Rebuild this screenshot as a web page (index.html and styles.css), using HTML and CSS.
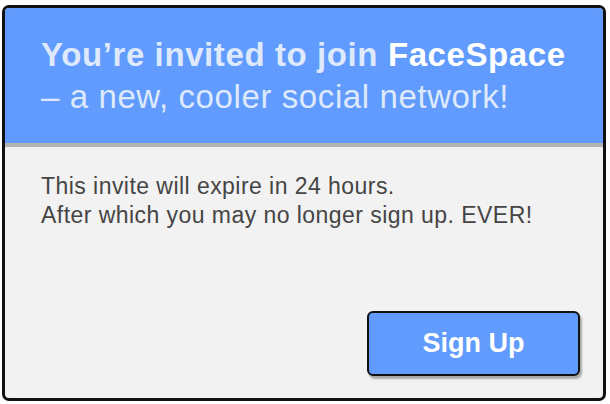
FILE: index.html
```html
<!DOCTYPE html>
<html>
<head>
<meta charset="utf-8">
<link rel="stylesheet" href="styles.css">
</head>
<body>
<div class="card">
  <div class="header">
    <div class="title">You’re invited to join <span class="brand">FaceSpace</span></div>
    <div class="subtitle">– a new, cooler social network!</div>
  </div>
  <div class="content">
    <p class="msg">This invite will expire in 24 hours.<br>After which you may no longer sign up. EVER!</p>
  </div>
  <div class="actions">
    <button class="btn">Sign Up</button>
  </div>
</div>
</body>
</html>
```
FILE: styles.css
```css
html, body {
  margin: 0;
  padding: 0;
  background: #ffffff;
}
body {
  font-family: "Liberation Sans", Arial, sans-serif;
}
.card {
  box-sizing: border-box;
  margin: 5px 0 0 2px;
  width: 604px;
  height: 396px;
  border: 3px solid #111;
  border-radius: 7px;
  background: #f2f2f2;
  overflow: hidden;
  display: flex;
  flex-direction: column;
}
.header {
  box-sizing: border-box;
  height: 139px;
  background: #609bfd;
  border-bottom: 4px solid #b3b3b3;
  padding: 26px 10px 0 36px;
  color: #dfe9fc;
  font-size: 33px;
  letter-spacing: 0.6px;
  white-space: nowrap;
}
.title {
  font-weight: bold;
  line-height: 42px;
}
.brand {
  color: #ffffff;
}
.subtitle {
  line-height: 42px;
}
.content {
  padding: 25px 36px 0 36px;
}
.msg {
  margin: 0;
  font-size: 23px;
  line-height: 29px;
  letter-spacing: 0.45px;
  color: #454545;
}
.actions {
  margin-top: auto;
  display: flex;
  justify-content: flex-end;
  padding: 0 23px 22px 0;
}
.btn {
  box-sizing: border-box;
  width: 213px;
  height: 65px;
  border: 2px solid #111;
  border-radius: 6px;
  background: #609bfd;
  box-shadow: 2px 3px 2px rgba(0, 0, 0, 0.3);
  color: #ffffff;
  font-family: "Liberation Sans", Arial, sans-serif;
  font-weight: bold;
  font-size: 27px;
  padding: 0;
}
```
